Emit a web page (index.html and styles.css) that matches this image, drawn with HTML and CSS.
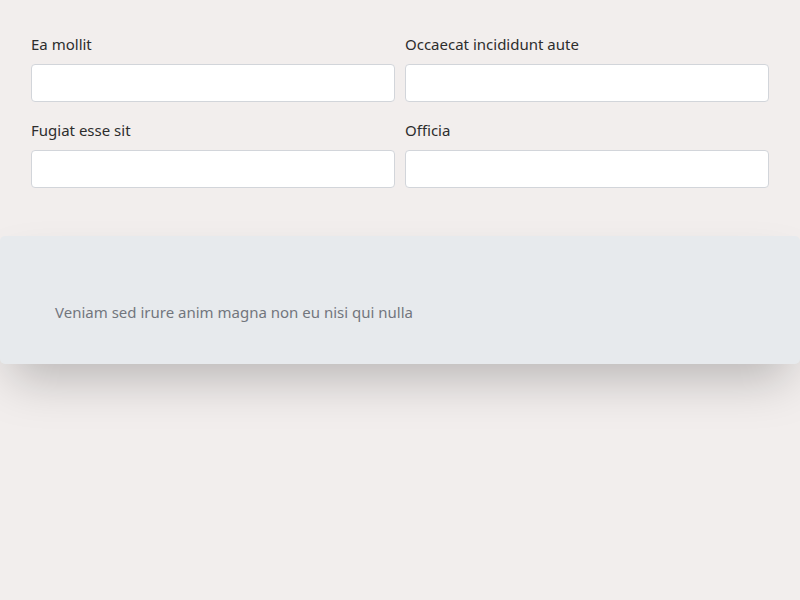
FILE: index.html
```html
<!DOCTYPE html>
<html>
<head>
<meta charset="utf-8">
<link rel="stylesheet" href="styles.css">
</head>
<body>
<main class="page">
<form class="form">
  <div class="field">
    <label class="label">Ea mollit</label>
    <input class="input" type="text">
  </div>
  <div class="field">
    <label class="label">Occaecat incididunt aute</label>
    <input class="input" type="text">
  </div>
  <div class="field">
    <label class="label">Fugiat esse sit</label>
    <input class="input" type="text">
  </div>
  <div class="field">
    <label class="label">Officia</label>
    <input class="input" type="text">
  </div>
</form>
<section class="card">
  <p class="card-text">Veniam sed irure anim magna non eu nisi qui nulla</p>
</section>
</main>
</body>
</html>
```
FILE: styles.css
```css
html, body {
  margin: 0;
  padding: 0;
  background: #f2eeed;
  font-family: "Noto Sans", "Open Sans", sans-serif;
}
.page {
  min-height: 600px;
}
.form {
  display: grid;
  grid-template-columns: 1fr 1fr;
  column-gap: 10px;
  row-gap: 16px;
  padding: 32px 31px 0;
}
.field {
  display: flex;
  flex-direction: column;
}
.label {
  font-size: 15px;
  line-height: 24px;
  color: #2d2d2d;
  margin-bottom: 8px;
}
.input {
  box-sizing: border-box;
  height: 38px;
  border: 1px solid #d2d5da;
  border-radius: 4px;
  background: #fff;
  padding: 0 10px;
  font: inherit;
}
.card {
  position: relative;
  margin-top: 48px;
  background: #e7eaed;
  border-radius: 5px;
  height: 128px;
  box-sizing: border-box;
  padding: 64px 55px 0;
  box-shadow: 0 25px 50px -12px rgba(0, 0, 0, 0.25);
}
.card-text {
  margin: 0;
  font-size: 15px;
  line-height: 24px;
  color: #72767d;
}
```
